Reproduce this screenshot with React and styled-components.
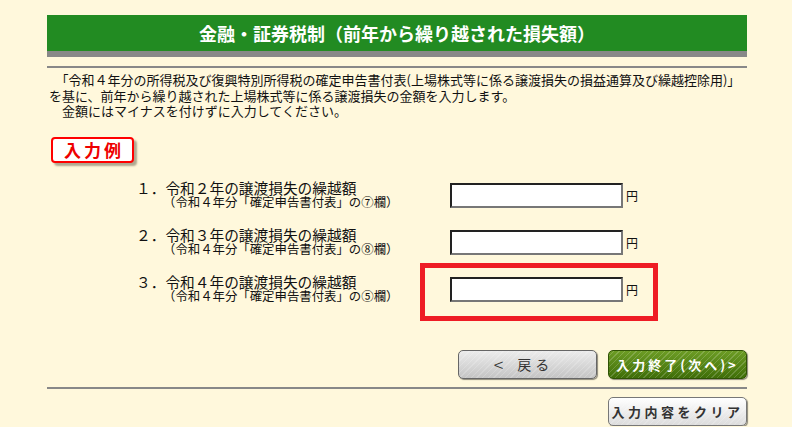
import React from "react";
import styled, { createGlobalStyle } from "styled-components";

const GlobalStyle = createGlobalStyle`
  html, body { margin: 0; padding: 0; background: #fff8dc; }
  body {
    font-family: "Noto Sans CJK JP", "Noto Sans", sans-serif;
    color: #111;
  }
`;

const Page = styled.div`
  width: 700px;
  margin-left: 47px;
  padding-top: 15px;
`;

const Header = styled.div`
  height: 36px;
  background: #228b22;
  border-bottom: 6px solid #888;
  display: flex;
  align-items: center;
  justify-content: center;
`;

const Title = styled.h1`
  margin: 0;
  font-size: 18px;
  font-weight: bold;
  color: #fff;
  line-height: 1;
`;

const Rule = styled.hr`
  border: 0;
  height: 2px;
  background: #888;
  margin: ${(p) => p.$top || 0}px 0 0 0;
`;

const Intro = styled.p`
  margin: 4px 0 0 0;
  padding-left: 2px;
  font-size: 13px;
  line-height: 15.5px;
  color: #111;
  white-space: nowrap;
`;

const Badge = styled.div`
  margin: 18px 0 0 4px;
  width: 83px;
  height: 26px;
  box-sizing: border-box;
  border: 2px solid #ff0000;
  border-radius: 4px;
  background: #fff;
  box-shadow: 3px 3px 2px #b0a890;
  display: flex;
  align-items: center;
  justify-content: center;
  color: #ee0000;
  font-size: 17px;
  font-weight: bold;
  letter-spacing: 3px;
  padding-left: 3px;
  line-height: 1;
`;

const Rows = styled.div`
  margin-top: 9px;
`;

const Row = styled.div`
  position: relative;
  height: 47px;
  display: grid;
  grid-template-columns: 314px 173px auto;
  align-items: center;
  padding-left: 89px;
`;

const Label = styled.div`
  display: flex;
  flex-direction: column;
  gap: 1px;
  padding-bottom: 1px;
`;

const MainLine = styled.div`
  font-size: 14.7px;
  line-height: 15px;
  height: 15px;
  white-space: nowrap;
  color: #111;
`;

const SubLine = styled.div`
  font-size: 12.4px;
  line-height: 13px;
  height: 13px;
  padding-left: 27px;
  white-space: nowrap;
  color: #111;
`;

const AmountInput = styled.input`
  box-sizing: border-box;
  width: 173px;
  height: 25px;
  margin: 0;
  padding: 2px 4px;
  background: #fff;
  border-style: solid;
  border-width: 2px;
  border-color: #222 #777 #777 #222;
  font-size: 13px;
  outline: none;
`;

const Unit = styled.span`
  font-size: 12px;
  margin-left: 3px;
  color: #111;
`;

const Highlight = styled.div`
  position: absolute;
  left: 373px;
  top: -3px;
  width: 238px;
  height: 58px;
  box-sizing: border-box;
  border: 5px solid #ee1c25;
  pointer-events: none;
`;

const ButtonRow = styled.div`
  display: flex;
  justify-content: flex-end;
  gap: 11px;
  margin-top: ${(p) => p.$top || 0}px;
`;

const stripes = `repeating-linear-gradient(135deg, rgba(255,255,255,0) 0px, rgba(255,255,255,0) 3px, rgba(255,255,255,0.18) 3px, rgba(255,255,255,0.18) 4px)`;

const variants = {
  gray: {
    bg: "linear-gradient(#ececec, #c4c4c4)",
    border: "#666",
    color: "#333",
    weight: "normal",
    size: "14px",
    spacing: "4px",
    pad: "0 8px 0 0",
  },
  green: {
    bg: "linear-gradient(#6c9c24, #3f6e08)",
    border: "#2f5205",
    color: "#fff",
    weight: "bold",
    size: "13px",
    spacing: "3px",
    pad: "0",
  },
  light: {
    bg: "linear-gradient(#ffffff, #dcdcdc)",
    border: "#777",
    color: "#333",
    weight: "bold",
    size: "13px",
    spacing: "3.5px",
    pad: "0",
  },
};

const Button = styled.button`
  width: 139px;
  height: 29px;
  box-sizing: border-box;
  padding: ${(p) => variants[p.$variant].pad};
  border-radius: 5px;
  border: 1px solid ${(p) => variants[p.$variant].border};
  background: ${stripes}, ${(p) => variants[p.$variant].bg};
  box-shadow: 1px 1px 1px rgba(0, 0, 0, 0.45);
  color: ${(p) => variants[p.$variant].color};
  font-family: "Noto Sans CJK JP", "Noto Sans", sans-serif;
  font-size: ${(p) => variants[p.$variant].size};
  font-weight: ${(p) => variants[p.$variant].weight};
  letter-spacing: ${(p) => variants[p.$variant].spacing};
  white-space: nowrap;
  display: flex;
  align-items: center;
  justify-content: center;
  cursor: pointer;
`;

const Arrow = styled.span`
  font-size: 18px;
  font-weight: 300;
  line-height: 1;
  margin-right: 10px;
`;

const items = [
  { no: "１．", year: "２", col: "⑦" },
  { no: "２．", year: "３", col: "⑧" },
  { no: "３．", year: "４", col: "⑤", highlight: true },
];

const SP = "\u3000";

export default function App() {
  return (
    <>
      <GlobalStyle />
      <Page>
        <Header>
          <Title>金融・証券税制（前年から繰り越された損失額）</Title>
        </Header>
        <Rule $top={9} />
        <Intro>
          {SP}
          「令和４年分の所得税及び復興特別所得税の確定申告書付表(上場株式等に係る譲渡損失の損益通算及び繰越控除用)」
          <br />
          を基に、前年から繰り越された上場株式等に係る譲渡損失の金額を入力します。
          <br />
          {SP}
          金額にはマイナスを付けずに入力してください。
        </Intro>
        <Badge>入力例</Badge>
        <Rows>
          {items.map((it) => (
            <Row key={it.no}>
              <Label>
                <MainLine>
                  {it.no}令和{it.year}年の譲渡損失の繰越額
                </MainLine>
                <SubLine>（令和４年分「確定申告書付表」の{it.col}欄）</SubLine>
              </Label>
              <AmountInput type="text" />
              <Unit>円</Unit>
              {it.highlight && <Highlight />}
            </Row>
          ))}
        </Rows>
        <ButtonRow $top={37}>
          <Button $variant="gray">
            <Arrow>&lt;</Arrow>戻る
          </Button>
          <Button $variant="green">入力終了(次へ)&gt;</Button>
        </ButtonRow>
        <Rule $top={8} />
        <ButtonRow $top={8}>
          <Button $variant="light">入力内容をクリア</Button>
        </ButtonRow>
      </Page>
    </>
  );
}
